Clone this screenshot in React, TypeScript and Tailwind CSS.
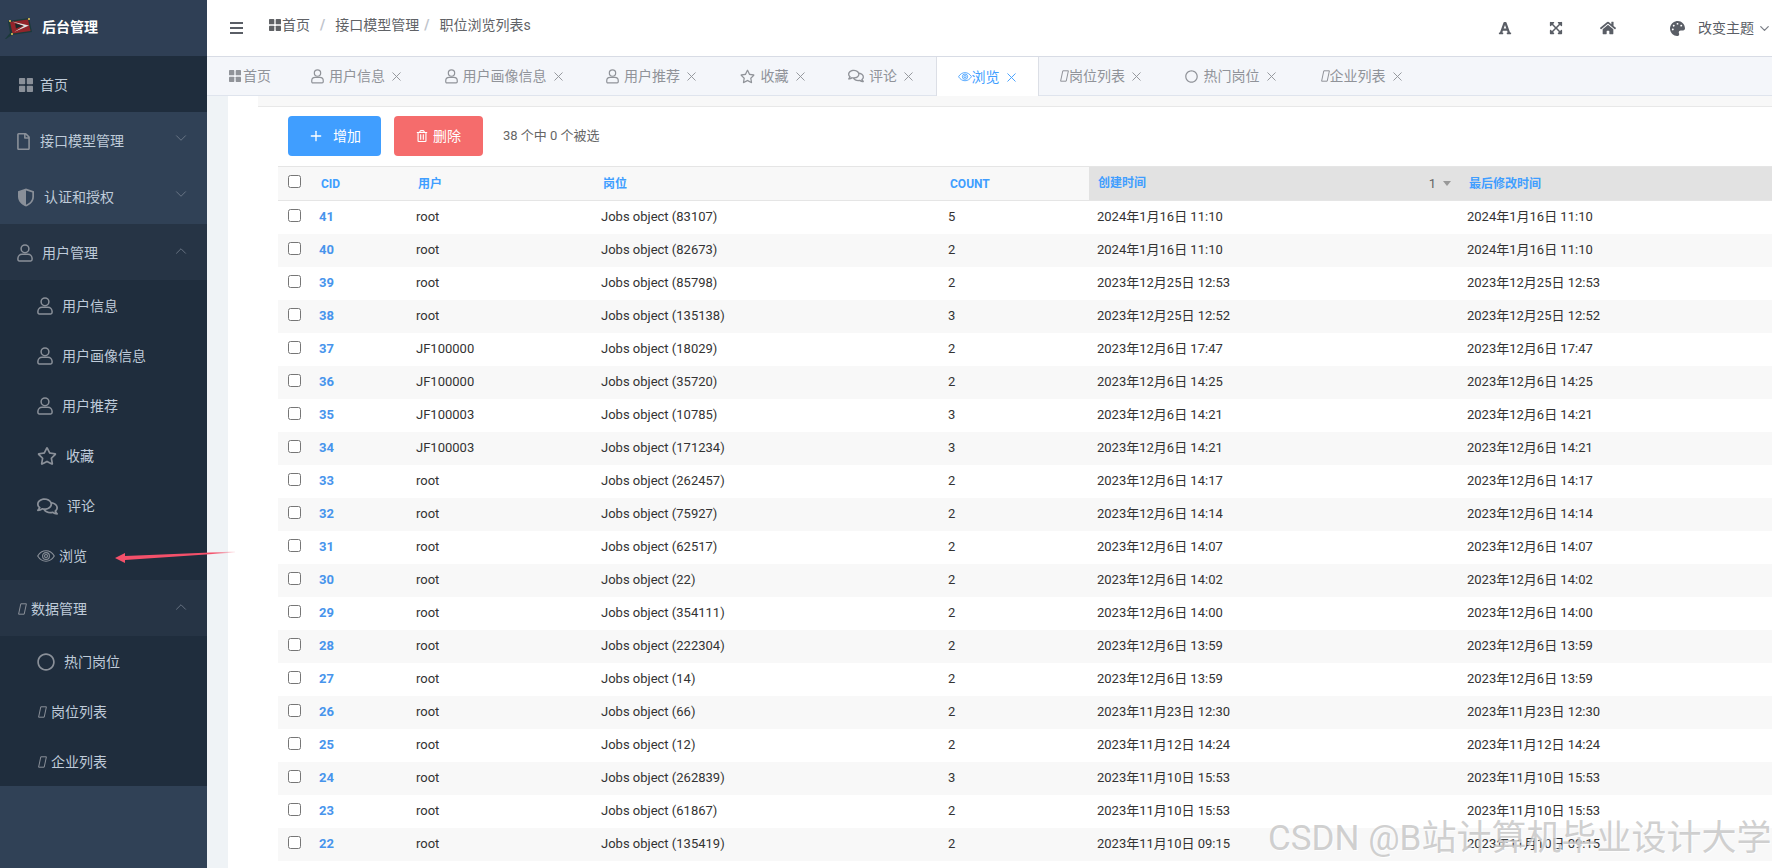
import type { ReactNode } from "react";
import {
  FaExpandArrowsAlt,
  FaFont,
  FaHome,
  FaPalette,
  FaRegCircle,
  FaRegComments,
  FaRegFile,
  FaRegStar,
  FaRegTrashAlt,
} from "react-icons/fa";
import { FiChevronDown, FiChevronUp, FiPlus, FiX } from "react-icons/fi";

const rows = [
  ["41", "root", "83107", "5", "2024年1月16日 11:10"],
  ["40", "root", "82673", "2", "2024年1月16日 11:10"],
  ["39", "root", "85798", "2", "2023年12月25日 12:53"],
  ["38", "root", "135138", "3", "2023年12月25日 12:52"],
  ["37", "JF100000", "18029", "2", "2023年12月6日 17:47"],
  ["36", "JF100000", "35720", "2", "2023年12月6日 14:25"],
  ["35", "JF100003", "10785", "3", "2023年12月6日 14:21"],
  ["34", "JF100003", "171234", "3", "2023年12月6日 14:21"],
  ["33", "root", "262457", "2", "2023年12月6日 14:17"],
  ["32", "root", "75927", "2", "2023年12月6日 14:14"],
  ["31", "root", "62517", "2", "2023年12月6日 14:07"],
  ["30", "root", "22", "2", "2023年12月6日 14:02"],
  ["29", "root", "354111", "2", "2023年12月6日 14:00"],
  ["28", "root", "222304", "2", "2023年12月6日 13:59"],
  ["27", "root", "14", "2", "2023年12月6日 13:59"],
  ["26", "root", "66", "2", "2023年11月23日 12:30"],
  ["25", "root", "12", "2", "2023年11月12日 14:24"],
  ["24", "root", "262839", "3", "2023年11月10日 15:53"],
  ["23", "root", "61867", "2", "2023年11月10日 15:53"],
  ["22", "root", "135419", "2", "2023年11月10日 09:15"],
];

function GridIcon({ size = 14 }: { size?: number }) {
  return (
    <svg width={size} height={size} viewBox="0 0 14 14" fill="currentColor" className="shrink-0">
      <rect x="0" y="0" width="6.2" height="6.2" rx="0.8" />
      <rect x="7.8" y="0" width="6.2" height="6.2" rx="0.8" />
      <rect x="0" y="7.8" width="6.2" height="6.2" rx="0.8" />
      <rect x="7.8" y="7.8" width="6.2" height="6.2" rx="0.8" />
    </svg>
  );
}

function UserIcon({ size = 16 }: { size?: number }) {
  return (
    <svg width={size} height={size + 2} viewBox="0 0 16 18" fill="none" stroke="currentColor" strokeWidth="1.5" className="shrink-0">
      <circle cx="8" cy="4.800" r="3.900" />
      <path d="M.9 14.500c0-2.500 1.900-4.300 4.200-4.300h5.800c2.300 0 4.200 1.800 4.200 4.300v.8c0 .9-.6 1.600-1.400 1.600H2.300c-.8 0-1.400-.7-1.400-1.600z" />
    </svg>
  );
}

function EyeIcon({ size = 18 }: { size?: number }) {
  return (
    <svg width={size} height={size * 0.67} viewBox="0 0 18 12" fill="none" stroke="currentColor" strokeWidth="1.100" className="shrink-0">
      <path d="M.7 6C2.800 2.600 5.600.8 9 .8s6.200 1.800 8.300 5.200c-2.100 3.400-4.900 5.200-8.300 5.200S2.800 9.400.7 6z" />
      <circle cx="9" cy="6" r="3.400" />
      <circle cx="9" cy="6" r="1.500" />
    </svg>
  );
}

function MissingGlyph() {
  return (
    <svg width="9" height="12" viewBox="0 0 9 12" fill="none" stroke="currentColor" strokeWidth="1" className="shrink-0">
      <path d="M2.800.8h5.600L6.200 11.200H.6z" />
    </svg>
  );
}

function ShieldIcon() {
  return (
    <svg width="18" height="19" viewBox="0 0 18 19" className="shrink-0">
      <path d="M9 .5 1 3.200v5.300c0 4.600 3.200 8.300 8 10 4.800-1.700 8-5.400 8-10V3.200z" fill="#8a9099" />
      <path d="M9 2.400v14.300c3.800-1.500 6.300-4.500 6.300-8.200V4.400z" fill="#304156" />
    </svg>
  );
}

function Logo() {
  return (
    <svg width="28" height="23" viewBox="0 0 28 23" className="shrink-0">
      <path d="M0 23 5 17 3 5 24 2 27 16 7 19 1 23z" fill="#1b3a3a" />
      <path d="M5 6 23 3.500 25.500 15 7.500 17.500z" fill="#93242a" />
      <path d="M7 5.500 24 9.500 9 16 19 10z" fill="#dfe5e3" />
      <path d="M10 7.500 18 9.800 11 12.500z" fill="#1c2a2a" />
      <path d="M4 4h2v2H4zM23 2h2v2h-2zM6 17h2v2H6z" fill="#b9a750" />
    </svg>
  );
}

function SideItem({
  icon,
  label,
  gap,
  left,
  bg,
  arrow,
}: {
  icon: ReactNode;
  label: string;
  gap: string;
  left: string;
  bg: string;
  arrow?: "up" | "down";
}) {
  return (
    <div className={`relative flex items-center pt-[2px] text-sm text-[#bfcbd9] ${left} ${gap} ${bg}`}>
      <span className="text-[#8a9099]">{icon}</span>
      <span>{label}</span>
      {arrow === "down" && <FiChevronDown className="absolute right-[17px] top-[17px] stroke-1 text-[#7b8694]" size={18} />}
      {arrow === "up" && <FiChevronUp className="absolute right-[17px] top-[18px] stroke-1 text-[#7b8694]" size={18} />}
    </div>
  );
}

function Tab({
  icon,
  label,
  gap,
  active,
  closable = true,
}: {
  icon: ReactNode;
  label: string;
  gap: string;
  active?: boolean;
  closable?: boolean;
}) {
  return (
    <div
      className={`flex h-full items-center text-sm ${closable ? "pl-[21px] pr-[19.500px]" : "pl-[22px] pr-[19px]"} ${
        active
          ? "border-x border-[#dcdfe6] bg-white pt-px text-[#409eff]"
          : "border-b border-[#dfe4ed] text-[#909399]"
      }`}
    >
      <span className={`flex items-center ${gap}`}>
        {icon}
        <span>{label}</span>
      </span>
      {closable && <FiX size={15} className="ml-1 stroke-[1.500]" />}
    </div>
  );
}

export default function App() {
  return (
    <div className="relative flex h-[868px] w-[1772px] overflow-hidden bg-white font-['Roboto','Noto_Sans_CJK_SC',sans-serif]">
      {/* sidebar */}
      <aside className="flex w-[207px] shrink-0 flex-col bg-[#304156]">
        <div className="flex h-14 items-center gap-[9px] bg-[#2f3f55] pb-[2px] pl-[5px] text-sm font-bold text-white">
          <Logo />
          <span>后台管理</span>
        </div>
        <SideItem icon={<GridIcon />} label="首页" gap="gap-[7px]" left="pl-[19px] h-14" bg="bg-[#1f2d3d]" />
        <SideItem icon={<FaRegFile size={17} />} label="接口模型管理" gap="gap-[8px]" left="pl-[15px] h-14" bg="" arrow="down" />
        <SideItem icon={<ShieldIcon />} label="认证和授权" gap="gap-[9px]" left="pl-[17px] h-14" bg="" arrow="down" />
        <SideItem icon={<UserIcon />} label="用户管理" gap="gap-[9px]" left="pl-[17px] h-14" bg="bg-[#263445]" arrow="up" />
        <div className="bg-[#1f2d3d]">
          <SideItem icon={<UserIcon />} label="用户信息" gap="gap-[9px]" left="pl-[37px] h-[50px]" bg="" />
          <SideItem icon={<UserIcon />} label="用户画像信息" gap="gap-[9px]" left="pl-[37px] h-[50px]" bg="" />
          <SideItem icon={<UserIcon />} label="用户推荐" gap="gap-[9px]" left="pl-[37px] h-[50px]" bg="" />
          <SideItem icon={<FaRegStar size={20} />} label="收藏" gap="gap-[9px]" left="pl-[37px] h-[50px]" bg="" />
          <SideItem icon={<FaRegComments size={21} />} label="评论" gap="gap-[9px]" left="pl-[37px] h-[50px]" bg="" />
          <SideItem icon={<EyeIcon />} label="浏览" gap="gap-[4px]" left="pl-[37px] h-[50px]" bg="" />
        </div>
        <SideItem icon={<MissingGlyph />} label="数据管理" gap="gap-[4px]" left="pl-[18px] h-14" bg="bg-[#263445]" arrow="up" />
        <div className="bg-[#1f2d3d]">
          <SideItem icon={<FaRegCircle size={18} />} label="热门岗位" gap="gap-[9px]" left="pl-[37px] h-[50px]" bg="" />
          <SideItem icon={<MissingGlyph />} label="岗位列表" gap="gap-[4px]" left="pl-[38px] h-[50px]" bg="" />
          <SideItem icon={<MissingGlyph />} label="企业列表" gap="gap-[4px]" left="pl-[38px] h-[50px]" bg="" />
        </div>
      </aside>

      <main className="flex min-w-0 flex-1 flex-col">
        {/* top bar */}
        <header className="flex h-14 shrink-0 items-center text-sm text-[#606266]">
          <svg width="13" height="12" viewBox="0 0 13 12" fill="#5a5e66" className="ml-[23px] mr-[26px]">
            <rect width="13" height="2" />
            <rect y="5" width="13" height="2" />
            <rect y="10" width="13" height="2" />
          </svg>
          <div className="flex -translate-y-[3px] items-center">
            <span className="flex items-center gap-[1px] text-[#606266]">
              <GridIcon size={12} />
              首页
            </span>
            <span className="mx-[10px] font-bold text-[#c0c4cc]">/</span>
            <span>接口模型管理</span>
            <span className="ml-[5px] mr-[10px] font-bold text-[#c0c4cc]">/</span>
            <span>职位浏览列表s</span>
          </div>
          <div className="ml-auto flex items-center text-[#5a5e66]">
            <FaFont size={14} />
            <FaExpandArrowsAlt size={14} className="ml-[37px]" />
            <FaHome size={16} className="ml-[37px]" />
            <FaPalette size={15} className="ml-[54px]" />
            <span className="ml-[13px]">改变主题</span>
            <FiChevronDown size={15} className="ml-[3px] text-[#7a7e86]" />
          </div>
        </header>

        {/* tabs */}
        <nav className="flex h-10 shrink-0 items-stretch border-t border-[#d8dce5] bg-[#f4f6fa]">
          <div className="flex h-full">
            <Tab icon={<GridIcon size={12} />} label="首页" gap="gap-[2px]" closable={false} />
            <Tab icon={<UserIcon size={13} />} label="用户信息" gap="gap-[5px]" />
            <Tab icon={<UserIcon size={13} />} label="用户画像信息" gap="gap-[5px]" />
            <Tab icon={<UserIcon size={13} />} label="用户推荐" gap="gap-[5px]" />
            <Tab icon={<FaRegStar size={15} />} label="收藏" gap="gap-[6px]" />
            <Tab icon={<FaRegComments size={16} />} label="评论" gap="gap-[5px]" />
            <Tab icon={<EyeIcon size={14} />} label="浏览" gap="gap-[0px]" active />
            <Tab icon={<MissingGlyph />} label="岗位列表" gap="gap-[0px]" />
            <Tab icon={<FaRegCircle size={13} />} label="热门岗位" gap="gap-[6px]" />
            <Tab icon={<span className="ml-[1.500px]"><MissingGlyph /></span>} label="企业列表" gap="gap-[0px]" />
          </div>
          <div className="flex-1 border-b border-[#dfe4ed]" />
        </nav>

        {/* content */}
        <div className="flex min-h-0 flex-1">
          <div className="w-[21px] shrink-0 bg-[#eff3f6]" />
          <div className="min-w-0 flex-1 bg-white">
            <div className="ml-[30px] h-[11px] border-b border-[#e8e8e8] bg-[#f8f8f8]" />
            <div className="mt-[9px] flex h-10 items-center pl-[60px] text-[13px] text-[#666]">
              <button className="flex h-10 w-[93px] items-center justify-center gap-[9px] rounded bg-[#409eff] text-sm text-white">
                <FiPlus size={16} />
                增加
              </button>
              <button className="ml-[13px] flex h-10 w-[89px] items-center justify-center gap-[5px] rounded bg-[#f56c6c] text-sm text-white">
                <FaRegTrashAlt size={12} />
                删除
              </button>
              <span className="ml-5">38 个中 0 个被选</span>
            </div>
            <div className="ml-[50px] mt-[10px]">
              <table className="w-[1494px] table-fixed border-collapse text-[13px] text-[#333]">
                <colgroup>
                  <col className="w-[33px]" />
                  <col className="w-[97px]" />
                  <col className="w-[185px]" />
                  <col className="w-[347px]" />
                  <col className="w-[149px]" />
                  <col className="w-[370px]" />
                  <col className="w-[313px]" />
                </colgroup>
                <thead>
                  <tr className="h-[34px] border-y border-[#e5e5e5] bg-[#f8f8f8] text-left text-xs font-bold text-[#409eff]">
                    <th className="p-0 pl-[10px] align-top">
                      <input type="checkbox" className="mt-2 block h-[13px] w-[13px]" />
                    </th>
                    <th className="pl-[10px]">CID</th>
                    <th className="pl-[10px]">用户</th>
                    <th className="pl-[10px]">岗位</th>
                    <th className="pl-[10px]">COUNT</th>
                    <th className="bg-[#e2e2e2] pl-[9px] pr-2">
                      <div className="flex items-center justify-between">
                        <span>创建时间</span>
                        <span className="flex items-center gap-[7px] text-[13px] font-normal text-[#666]">
                          1
                          <svg width="8" height="5" viewBox="0 0 8 5" fill="#999">
                            <path d="M0 0h8L4 5z" />
                          </svg>
                        </span>
                      </div>
                    </th>
                    <th className="bg-[#e2e2e2] pl-[10px]">最后修改时间</th>
                  </tr>
                </thead>
                <tbody>
                  {rows.map((r, i) => (
                    <tr key={r[0]} className={`h-[33px] ${i % 2 === 1 ? "bg-[#f8f8f8]" : "bg-white"}`}>
                      <td className="p-0 pl-[10px] align-top">
                        <input type="checkbox" className="mt-2 block h-[13px] w-[13px]" />
                      </td>
                      <td className="pb-px pl-2 font-bold text-[#4794ec]">{r[0]}</td>
                      <td className="pb-px pl-2">{r[1]}</td>
                      <td className="pb-px pl-2">Jobs object ({r[2]})</td>
                      <td className="pb-px pl-2">{r[3]}</td>
                      <td className="pb-px pl-2">{r[4]}</td>
                      <td className="pb-px pl-2">{r[4]}</td>
                    </tr>
                  ))}
                </tbody>
              </table>
            </div>
          </div>
        </div>
      </main>

      {/* annotation arrow pasted on the screenshot */}
      <svg width="124" height="16" viewBox="0 0 124 16" className="pointer-events-none absolute left-[113px] top-[548px]">
        <defs>
          <linearGradient id="arrowFade" x1="0" y1="0" x2="1" y2="0">
            <stop offset="0" stopColor="#f4506a" />
            <stop offset="0.8" stopColor="#f4506a" />
            <stop offset="1" stopColor="#f4506a" stopOpacity="0.1" />
          </linearGradient>
        </defs>
        <path d="M2 10 12 5 12 8 122 3.500 122 4.500 12 12 12 15z" fill="url(#arrowFade)" />
      </svg>

      {/* CSDN watermark */}
      <div className="pointer-events-none absolute left-[1268px] top-[815px] whitespace-nowrap text-[35px] leading-[48px] text-[#bbb]/70 [text-shadow:1px_1px_1px_rgba(255,255,255,0.8)]">
        CSDN @B站计算机毕业设计大学
      </div>
    </div>
  );
}
